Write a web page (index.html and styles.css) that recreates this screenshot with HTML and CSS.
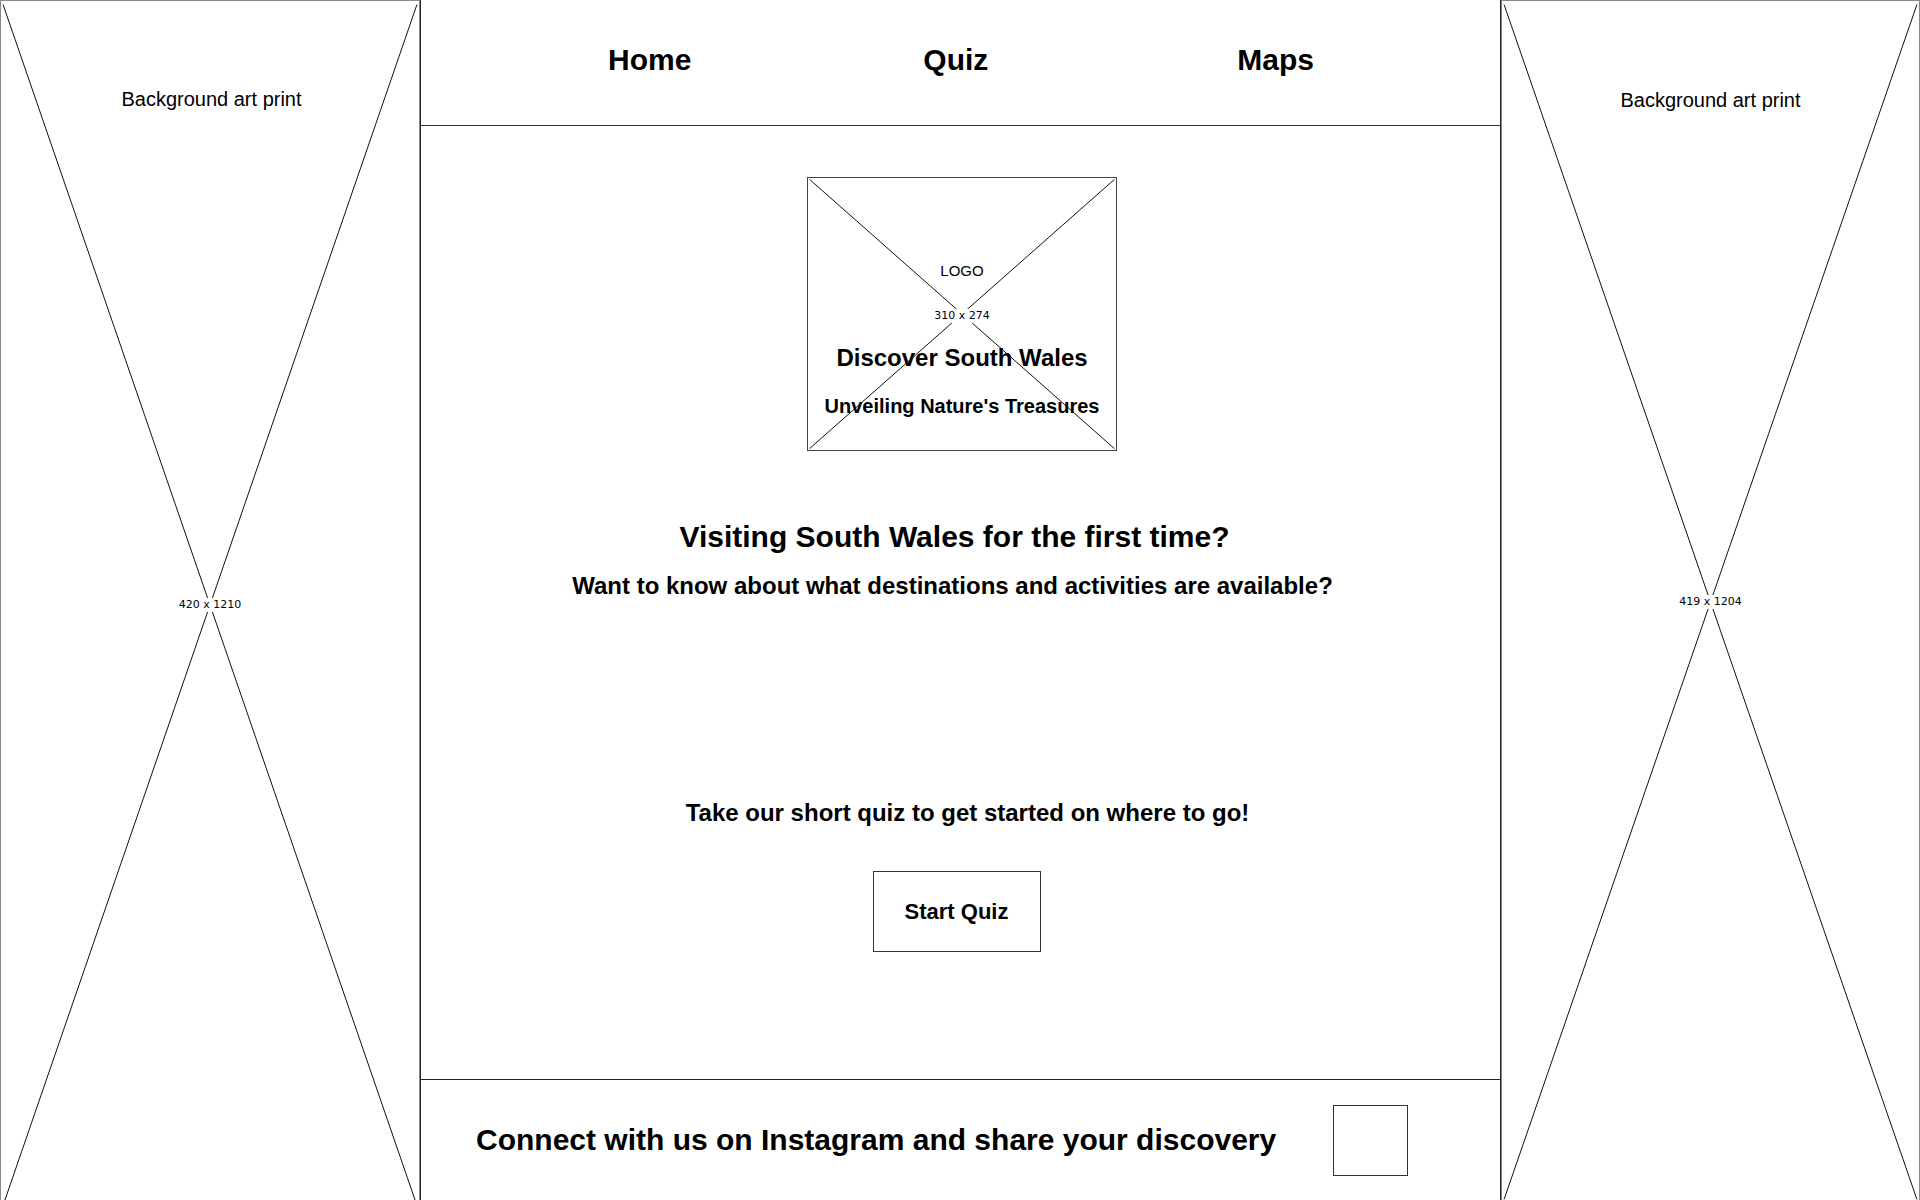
FILE: index.html
```html
<!DOCTYPE html>
<html lang="en">
<head>
    <meta charset="UTF-8">
    <meta name="viewport" content="width=device-width, initial-scale=1.0">
    <title>Discover South Wales</title>
    <link rel="stylesheet" href="styles.css">
</head>
<body>
    <div class="page">
        <aside class="art art-left">
            <svg class="cross" viewBox="0 0 100 100" preserveAspectRatio="none">
                <line x1="0.5" y1="0.3" x2="99.5" y2="99.7" vector-effect="non-scaling-stroke"/>
                <line x1="99.5" y1="0.3" x2="0.5" y2="99.7" vector-effect="non-scaling-stroke"/>
            </svg>
            <p class="art-title">Background art print</p>
            <span class="size">420 x 1210</span>
        </aside>

        <div class="main">
            <header class="top-nav">
                <a href="#" class="nav-home">Home</a>
                <a href="#" class="nav-quiz">Quiz</a>
                <a href="#" class="nav-maps">Maps</a>
            </header>

            <section class="intro">
                <div class="logo-box">
                    <svg class="cross" viewBox="0 0 100 100" preserveAspectRatio="none">
                        <line x1="0.5" y1="0.5" x2="99.5" y2="99.5" vector-effect="non-scaling-stroke"/>
                        <line x1="99.5" y1="0.5" x2="0.5" y2="99.5" vector-effect="non-scaling-stroke"/>
                    </svg>
                    <span class="size">310 x 274</span>
                    <p class="logo-text">LOGO</p>
                    <h1>Discover South Wales</h1>
                    <h2>Unveiling Nature's Treasures</h2>
                </div>

                <h2 class="lead">Visiting South Wales for the first time?</h2>
                <p class="sub">Want to know about what destinations and activities are available?</p>

                <p class="cta">Take our short quiz to get started on where to go!</p>
                <button type="button" class="start-btn">Start Quiz</button>
            </section>

            <footer class="social">
                <p>Connect with us on Instagram and share your discovery</p>
                <div class="insta-box"></div>
            </footer>
        </div>

        <aside class="art art-right">
            <svg class="cross" viewBox="0 0 100 100" preserveAspectRatio="none">
                <line x1="0.5" y1="0.3" x2="99.5" y2="99.7" vector-effect="non-scaling-stroke"/>
                <line x1="99.5" y1="0.3" x2="0.5" y2="99.7" vector-effect="non-scaling-stroke"/>
            </svg>
            <p class="art-title">Background art print</p>
            <span class="size">419 x 1204</span>
        </aside>
    </div>
</body>
</html>
```

FILE: styles.css
```css
body {
    font-family: "Liberation Sans", Arial, sans-serif;
    margin: 0;
    padding: 0;
    background: #fff;
    color: #000;
    height: 1200px;
    overflow: hidden;
}
.page {
    display: flex;
    height: 1200px;
}

/* side art panels */
.art {
    position: relative;
    flex-shrink: 0;
    box-sizing: border-box;
    border: 1px solid #888;
    text-align: center;
}
.art-left {
    width: 420px;
    height: 1210px;
}
.art-right {
    width: 419px;
    height: 1204px;
}
.art-title {
    position: relative;
    margin: 0;
    padding-top: 86px;
    font-size: 20px;
    line-height: 24px;
}
.art-left .art-title {
    margin-left: 3px;
}
.art-right .art-title {
    padding-top: 87px;
}
.cross {
    position: absolute;
    top: 0;
    left: 0;
    width: 100%;
    height: 100%;
}
.cross line {
    stroke: #111;
    stroke-width: 1;
}
.size {
    position: absolute;
    top: 50%;
    left: 50%;
    transform: translate(-50%, -50%);
    font-family: "DejaVu Sans", sans-serif;
    font-size: 11px;
    line-height: 14px;
    padding: 0 2px;
    background: #fff;
    white-space: nowrap;
}
.logo-box .size {
    top: calc(50% + 2px);
}

/* centre column */
.main {
    flex: 1;
    display: flex;
    flex-direction: column;
    height: 1200px;
    border-left: 1px solid #222;
    border-right: 1px solid #222;
}
.top-nav {
    display: flex;
    box-sizing: border-box;
    height: 126px;
    padding: 42px 0 0 187px;
    border-bottom: 1px solid #333;
}
.top-nav a {
    font-size: 30px;
    line-height: 36px;
    font-weight: bold;
    color: #000;
    text-decoration: none;
}
.nav-quiz {
    margin-left: 232px;
}
.nav-maps {
    margin-left: 249px;
}

.intro {
    flex: 1;
    display: flex;
    flex-direction: column;
    align-items: center;
}
.logo-box {
    position: relative;
    box-sizing: border-box;
    width: 310px;
    height: 274px;
    margin: 51px 0 0 3px;
    padding-top: 84px;
    border: 1px solid #444;
    text-align: center;
}
.logo-text {
    position: relative;
    margin: 0;
    font-size: 15px;
    line-height: 18px;
}
.logo-box h1 {
    position: relative;
    margin: 64px 0 0;
    font-size: 24px;
    line-height: 28px;
}
.logo-box h2 {
    position: relative;
    margin: 22px 0 0;
    font-size: 20px;
    line-height: 24px;
}
.lead {
    margin: 68px 0 0 -12px;
    font-size: 30px;
    line-height: 36px;
}
.sub {
    margin: 16px 0 0 -16px;
    font-size: 24px;
    line-height: 30px;
    font-weight: bold;
}
.cta {
    margin: 197px 0 0 14px;
    font-size: 24px;
    line-height: 30px;
    font-weight: bold;
}
.start-btn {
    width: 168px;
    height: 81px;
    margin: 43px 0 0 -8px;
    font-family: inherit;
    font-size: 22px;
    font-weight: bold;
    color: #000;
    background: #fff;
    border: 1px solid #333;
    border-radius: 0;
    cursor: pointer;
}

.social {
    display: flex;
    align-items: center;
    height: 120px;
    padding-left: 55px;
    border-top: 1px solid #222;
}
.social p {
    margin: 0;
    font-size: 30px;
    line-height: 36px;
    font-weight: bold;
}
.insta-box {
    width: 75px;
    height: 71px;
    margin-left: 57px;
    box-sizing: border-box;
    border: 1px solid #333;
}
```
